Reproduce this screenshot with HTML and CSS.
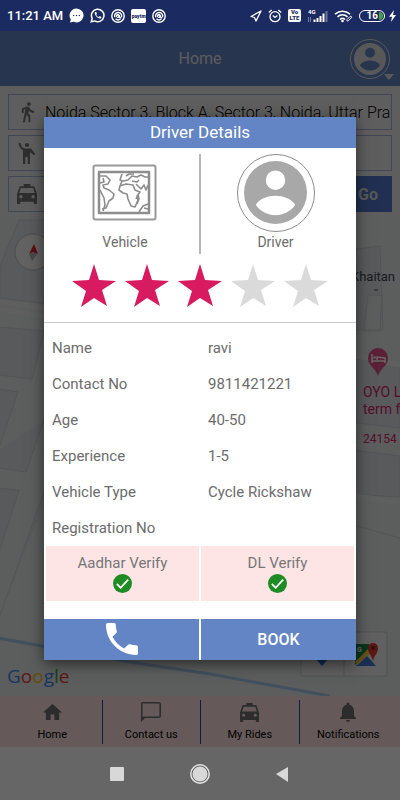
FILE: index.html
```
<!DOCTYPE html>
<html lang="en">
<head>
<meta charset="utf-8">
<meta name="viewport" content="width=device-width, initial-scale=1">
<title>Driver Details</title>
<link rel="stylesheet" href="styles.css">
</head>
<body>
<svg class="sprite" aria-hidden="true">
  <symbol id="person" viewBox="2 2 20 20"><path fill-rule="evenodd" d="M12 2a10 10 0 1 0 0 20 10 10 0 0 0 0-20zM12 5a3.100 3.100 0 1 1 0 6.200a3.100 3.100 0 0 1 0-6.200zM12 19.200c-2.500 0-4.900-1.300-6-2.900-.2-.3-.2-.5 0-.8 1-1.500 3.600-2.500 6-2.500s5 1 6 2.500c.2.3.2.5 0 .8-1.100 1.600-3.500 2.900-6 2.900z"/></symbol>
  <symbol id="taxi" viewBox="3 3 18 18"><path fill-rule="evenodd" d="M18.920 6c-.2-.6-.77-1-1.420-1H15V3H9v2H6.500c-.66 0-1.210.42-1.420 1L3 12v8c0 .55.450 1 1 1h1c.55 0 1-.45 1-1v-1h12v1c0 .55.450 1 1 1h1c.55 0 1-.45 1-1v-8zM6.500 16a1.500 1.500 0 1 1 0-3 1.500 1.500 0 0 1 0 3zM17.500 16a1.500 1.500 0 1 1 0-3 1.500 1.500 0 0 1 0 3zM5 11l1.500-4.500h11L19 11z"/></symbol>
  <symbol id="star" viewBox="0 0 44 43"><path d="M22 0 27 16 44 17 30 26 35 42 22 34 9 43 14 27 0 17 17 16z"/></symbol>
  <symbol id="check" viewBox="2 2 20 20"><circle cx="12" cy="12" r="10" fill="#1f8b24"/><path d="M6 12.500l4 4 8-8.500" fill="none" stroke="#fff" stroke-width="1.900"/></symbol>
  <symbol id="swirl" viewBox="0 0 14 14"><g fill="none" stroke="#fff"><circle cx="7" cy="7" r="6.200" stroke-width="1.400"/><path d="M3.800 8.300C2.900 5.500 5 3.400 7.300 3.500c2.600.1 4 2.400 3.100 4.700M4.500 9.700c1.300 1.300 3.500 1.400 5 .1M5.800 5.300l4 4" stroke-width="1.400"/><circle cx="7" cy="7" r="1.600"/></g></symbol>
</svg>

<header class="status">
  <span class="clock">11:21 AM</span>
  <svg width="15" height="15" viewBox="0 0 15 15"><path d="M7.500.5a7 7 0 1 1-3 13.300L1 14.500l.8-3A7 7 0 0 1 7.500.5z" fill="#fff"/><path d="M4 7.500h1.200m1.700 0h1.200m1.700 0H11" stroke="#1b2b62" stroke-width="1.200"/></svg>
  <svg width="15" height="15" viewBox="0 0 24 24"><path d="M2 22l1.500-5.300A10 10 0 1 1 7.400 20.700z" fill="none" stroke="#fff" stroke-width="2.400"/><path d="M8.200 6.500c-2.600 3 3.500 10.300 7.800 10.400 1.500 0 2.600-1.600 2.200-2.600l-2.500-1.400-1.500 1.600c-2-.6-3.600-2.200-4.200-3.800L11.100 9 10 6.500z" fill="#fff"/></svg>
  <svg width="14" height="14"><use href="#swirl"/></svg>
  <span class="chip paytm">paytm</span>
  <svg width="14" height="14"><use href="#swirl"/></svg>
  <span class="spacer"></span>
  <svg width="12" height="12" viewBox="0 0 12 12"><path d="M11 1 1 6.500l3.500 1L6 11z" fill="none" stroke="#fff" stroke-width="1.300" stroke-linejoin="round"/></svg>
  <svg width="14" height="14" viewBox="0 0 14 14"><g fill="none" stroke="#fff" stroke-width="1.300"><circle cx="7" cy="7.700" r="5"/><path d="M.8 3.500 3.700 1M13.200 3.500 10.300 1M4.800 6.500 7 8.500l2.400-2"/></g></svg>
  <span class="chip volte"><b>Vo</b><b>LTE</b></span>
  <svg width="21" height="14" viewBox="0 0 21 14"><text x="1" y="5" class="net">4G</text><path d="M1.500 13V8m2 0v5" stroke="#8b94b8" stroke-width=".8"/><path d="M7.500 13v-2.500m3 2.500V9m3 4V7m3 6V4.500" stroke="#fff" stroke-width="2"/><path d="M19.500 13V2" stroke="#69749e" stroke-width="2"/></svg>
  <svg width="19" height="14" viewBox="0 0 19 14"><g fill="none" stroke="#fff" stroke-width="1.600"><path d="M1 5.200c4.500-4 10.500-4 15 0M3.500 7.900c3-2.700 7-2.700 10 0M6 10.500c1.500-1.300 3.500-1.300 5 0"/><path d="M13 10.500l3-3c1-.8 2.200.4 1.300 1.300l-3 3c-1 .8-2.200-.4-1.300-1.300z" stroke-width="1"/></g><circle cx="8.500" cy="12" r="1.300" fill="#fff"/></svg>
  <span class="power"><span class="battery">16<i></i></span>
  <svg width="7" height="12" viewBox="0 0 7 12"><path d="M5 0 0 6.800h3L2 12l5-7H4z" fill="#fff"/></svg></span>
</header>

<main class="app">
  <div class="titlebar">
    <h1>Home</h1>
    <button class="account" aria-label="Account"><span class="ring"><svg><use href="#person"/></svg></span></button>
    <svg class="caret" width="10" height="6" viewBox="0 0 10 6"><path d="M0 0h10L5 6z"/></svg>
  </div>

  <form class="search">
    <label class="field">
      <svg viewBox="4 1 16 23" width="15" height="25"><path d="M13.500 5.500a2 2 0 1 0 0-4 2 2 0 0 0 0 4zM9.800 8.900 7 23h2.100l1.800-8 2.100 2v6h2v-7.500l-2.100-2 .6-3A7.300 7.300 0 0 0 19 13v-2c-1.900 0-3.500-1-4.300-2.400l-1-1.600c-.4-.6-1-1-1.700-1-.3 0-.5.1-.8.1L6 8.300V13h2V9.600z"/></svg>
      <input type="text" aria-label="Pickup location" value="Noida Sector 3, Block A, Sector 3, Noida, Uttar Pra">
    </label>
    <label class="field">
      <svg viewBox="3 1 18 22" width="18" height="24"><circle cx="12" cy="4" r="2.100"/><path d="M16 7.500H9.500C7.200 6.800 5.900 4.900 5.700 2H3.600c.1 3.200 1.700 6 4.400 7.400V23h2.300v-7h2.400v7H15v-12l3.700 3.300 1.500-1.500z"/></svg>
      <input type="text" aria-label="Drop location">
    </label>
    <div class="line">
      <label class="field">
        <svg width="20" height="20"><use href="#taxi"/></svg>
        <input type="text" aria-label="Ride type">
      </label>
      <button class="go" type="button">Go</button>
    </div>
  </form>

  <svg class="map" viewBox="0 216 400 480" preserveAspectRatio="xMinYMin slice" role="img" aria-label="Map">
    <rect y="216" width="400" height="480" fill="#e6e8e8"/>
    <g fill="#dfe1e5" stroke="#cfd1d5">
      <path d="M19 220 0 266v32l48 6v-84z"/>
      <path d="M-1 327l45 4-12 48-33-4zM-1 389l19 3-19 56zM44 420 26 472l-27-4v-18M-1 488l20 2-20 62zM48 494 44 492-1 618"/>
      <path d="M350 250l30-4 3 84h-33zM364 331h16l2-36h-14zM350 358l50 8v62l-50-6zM350 450l50 6v41l-50-3zM350 524l50 14"/>
    </g>
    <path d="M-2 302l50 6M-2 309l50 8M350 355l52 10M350 495l52 8" stroke="#ededed" stroke-width="5" fill="none"/>
    <path d="M-2 638 130 662 210 674 330 696" stroke="#a4c8e8" stroke-width="3" fill="none"/>
    <circle cx="33" cy="252" r="18" fill="#f5f5f5" stroke="#bbb"/>
    <path d="M34 244 38 254 33 252 29 254z" fill="#e2202c"/><path d="M29 254 33 252 37 254 32 261z" fill="#b4b4b4"/>
    <g class="place"><text x="351" y="281" fill="#3d4650" class="area">Khaitan</text><path d="M374 290h4" stroke="#555"/></g>
    <path d="M378 376c-3-9-10-10-10-18a10 10 0 0 1 20 0c0 8-7 9-10 18z" fill="#e0508a"/>
    <path d="M372 354v9m0-2h13v2m0-2v-3l-8-1v3" fill="none" stroke="#fff" stroke-width="1.500"/><circle cx="374.500" cy="357.500" r="1.300" fill="#fff"/>
    <g class="place" fill="#d8246c"><text x="363" y="397">OYO L</text><text x="363" y="414">term f</text><text x="363" y="443" class="small">24154</text></g>
    <g><rect x="301" y="632" width="86" height="44" rx="2" fill="#f0f0f0" stroke="#ccc"/><path d="M344 632v44" stroke="#ccc"/><path d="M322 666 315 658h14z" fill="#2566cf"/>
      <path d="M356 644h19v21h-19z" fill="#e8e8e8"/><path d="M355 644h14v8l-14 13z" fill="#178b43"/><path d="M356 666 366 655 376 666z" fill="#3d76d8"/><path d="M355 662 368 649l3 3-13 13z" fill="#f4cf46"/><path d="M373 661c-1-6-5-7-5-13a5 5 0 0 1 10 0c0 6-4 7-5 13z" fill="#df3e31"/><circle cx="373" cy="648" r="2" fill="#8b1d18"/><text x="357" y="652" class="mini">G</text></g>
    <text x="7" y="683" class="google"><tspan fill="#4285f4">G</tspan><tspan fill="#ea4335">o</tspan><tspan fill="#fbbc05">o</tspan><tspan fill="#4285f4">g</tspan><tspan fill="#34a853">l</tspan><tspan fill="#ea4335">e</tspan></text>
  </svg>

  <nav class="tabs">
    <a href="#home"><svg viewBox="2 3 20 17" width="19" height="18"><path d="M10 20v-6h4v6h5v-8h3L12 3 2 12h3v8z"/></svg>Home</a>
    <a href="#contact"><svg viewBox="2 2 20 20" width="20" height="20"><path fill-rule="evenodd" d="M4 2h16c1.100 0 2 .9 2 2v12c0 1.100-.9 2-2 2H6l-4 4V4c0-1.100.9-2 2-2zM3.500 17l1-.6H20.400V3.600H3.500z"/></svg>Contact us</a>
    <a href="#rides"><svg width="19" height="19"><use href="#taxi"/></svg>My Rides</a>
    <a href="#notifications"><svg viewBox="4 2 16 20" width="16" height="20"><path d="M12 22c1.100 0 2-.9 2-2h-4c0 1.100.9 2 2 2zm6-6v-5c0-3.070-1.640-5.640-4.500-6.320V4a1.500 1.500 0 0 0-3 0v.68C7.630 5.360 6 7.920 6 11v5l-2 2v1h16v-1z"/></svg>Notifications</a>
  </nav>

  <div class="backdrop">
    <section class="dialog" role="dialog" aria-labelledby="dialog-title">
      <h2 id="dialog-title">Driver Details</h2>
      <div class="photos">
        <figure>
          <svg width="78" height="78" viewBox="0 0 78 78" fill="none" stroke="#8d8d8d" stroke-linejoin="round">
            <rect x="7.500" y="11.500" width="62" height="54" rx="2" stroke="#999" stroke-width="2"/>
            <rect x="13" y="18" width="50" height="41" stroke-width="2.500"/>
            <path stroke-width="1.600" d="M14 22h6l4 4-2 4-5 1 1 3 5 2 5 4-1 4-4 3-3 7-4 1M14 36l4 8 1 7-2 6M14 29l4-1-1-4M36 20l-2 6 3 1 5-1 4-4 5 1 4-2 4 2h4M40 22l3-2 5 0M34 32l-1 4 4 3 4 1 1 5 3 7 4 1 3-7-1-4 3-4-5-2-2-5-7-1zM36 27l-2 5M46 27l5 1 2-2M50 30l5 5 3-4 2 5 2-5M50 45l2-4 1 4-2 5M53 58l4-6 5-2M58 54l4 1"/>
          </svg>
          <figcaption>Vehicle</figcaption>
        </figure>
        <figure>
          <span class="ring"><svg><use href="#person"/></svg></span>
          <figcaption>Driver</figcaption>
        </figure>
      </div>
      <div class="rating" role="img" aria-label="3 out of 5 stars">
        <svg class="on"><use href="#star"/></svg><svg class="on"><use href="#star"/></svg><svg class="on"><use href="#star"/></svg><svg><use href="#star"/></svg><svg><use href="#star"/></svg>
      </div>
      <table>
        <tr><th scope="row">Name</th><td>ravi</td></tr>
        <tr><th scope="row">Contact No</th><td>9811421221</td></tr>
        <tr><th scope="row">Age</th><td>40-50</td></tr>
        <tr><th scope="row">Experience</th><td>1-5</td></tr>
        <tr><th scope="row">Vehicle Type</th><td>Cycle Rickshaw</td></tr>
        <tr><th scope="row">Registration No</th><td></td></tr>
      </table>
      <div class="verify">
        <div>Aadhar Verify<svg><use href="#check"/></svg></div>
        <div>DL Verify<svg><use href="#check"/></svg></div>
      </div>
      <div class="actions">
        <button aria-label="Call driver"><svg viewBox="3 3 18 18" width="32" height="32"><path d="M6.620 10.790c1.440 2.830 3.760 5.140 6.590 6.590l2.200-2.200c.27-.27.670-.36 1.020-.24 1.120.37 2.330.57 3.570.57.55 0 1 .45 1 1V20c0 .55-.45 1-1 1-9.390 0-17-7.610-17-17 0-.55.450-1 1-1h3.500c.55 0 1 .45 1 1 0 1.250.2 2.450.57 3.570.11.350.030.740-.25 1.020z"/></svg></button>
        <button>BOOK</button>
      </div>
    </section>
  </div>
</main>

<footer class="sysnav">
  <button aria-label="Recent apps"><svg width="22" height="22"><rect x="4" y="4" width="14" height="14" rx="1"/></svg></button>
  <button aria-label="Home screen"><svg width="22" height="22"><circle cx="11" cy="11" r="7.500"/><circle cx="11" cy="11" r="9.200" fill="none" stroke="#e4e4e4" stroke-width="1.500"/></svg></button>
  <button aria-label="Back"><svg width="22" height="22"><path d="M4 11 16 4v15z"/></svg></button>
</footer>
</body>
</html>
```

FILE: styles.css
```
* { box-sizing: border-box; }

body {
  margin: 0;
  min-height: 100vh;
  display: flex;
  flex-direction: column;
  font-family: Roboto, sans-serif;
  color: #111;
  background: #666;
}

h1, h2, figure { margin: 0; font-weight: 400; }
button { border: 0; padding: 0; background: none; font: inherit; color: inherit; }
svg { display: block; flex: none; }
.sprite { position: absolute; width: 0; height: 0; }

/* Status bar */
.status {
  height: 31px;
  padding: 0 4px 0 7px;
  display: flex;
  align-items: center;
  gap: 6px;
  color: #fff;
  background: #1b2b62;
}
.clock { font-size: 13px; font-weight: 500; }
.spacer { flex: 1; }
.chip {
  background: #fff;
  color: #1b2b62;
  border-radius: 2px;
  text-align: center;
  font-weight: 900;
}
.paytm { width: 15px; height: 14px; font-size: 5px; line-height: 14px; }
.volte { width: 13px; height: 13px; font-size: 6px; line-height: 6px; }
.volte b { display: block; }
.net { font-size: 6px; font-weight: 700; fill: #fff; }
.power { display: flex; align-items: center; gap: 4px; }
.battery {
  width: 26px;
  height: 12px;
  border: 1px solid #fff;
  border-radius: 6px;
  display: flex;
  align-items: center;
  justify-content: flex-end;
  gap: 1px;
  padding-right: 1px;
  font-size: 10px;
  font-weight: 700;
}
.battery i { width: 4px; height: 8px; background: #43a047; border-radius: 0 4px 4px 0; }

/* App screen */
.app {
  flex: 1;
  position: relative;
  display: flex;
  flex-direction: column;
  background: #ececec;
}
.titlebar {
  position: relative;
  height: 55px;
  flex: none;
  display: grid;
  grid-template-columns: 1fr auto 1fr;
  align-items: center;
  padding: 0 10px;
  background: #6485c5;
}
.titlebar h1 { grid-column: 2; font-size: 16px; color: #e4e4e4; }
.account { justify-self: end; }
.caret { position: absolute; right: 6px; bottom: 6px; fill: #ddd; }
.ring {
  display: grid;
  place-items: center;
  border-radius: 50%;
}
.account .ring { width: 40px; height: 40px; border: 1px solid #ddd; fill: #ddd; }
.account .ring svg { width: 32px; height: 32px; }

.search {
  padding: 8px 8px 4px;
  display: flex;
  flex-direction: column;
  gap: 5px;
}
.field {
  flex: 1;
  height: 36px;
  min-width: 0;
  display: grid;
  grid-template-columns: 36px 1fr;
  align-items: center;
  border: 1px solid #a9b0d4;
  fill: #737373;
}
.field svg { justify-self: center; }
.search > .field { flex: none; }
.field input {
  width: 100%;
  min-width: 0;
  border: 0;
  padding: 0;
  background: none;
  font: 300 16px Roboto, sans-serif;
  color: #000;
}
.line { display: flex; }
.go {
  width: 48px;
  background: #5478cc;
  color: #ddd;
  font-size: 16px;
  font-weight: 700;
}
.map { flex: 1; width: 100%; height: 0; }
.place { font-size: 14px; }
.place .area { font-size: 13px; }
.place .small { font-size: 12px; }
.google { font: 500 19px "Open Sans", sans-serif; }
.mini { font-size: 7px; font-weight: 700; fill: #fff; }

.tabs {
  height: 51px;
  flex: none;
  display: grid;
  grid-template-columns: repeat(4, 1fr);
  padding: 4px 3px;
  background: #fde0df;
}
.tabs a {
  display: grid;
  grid-template-rows: 24px 20px;
  place-items: center;
  font-size: 11px;
  color: #000;
  fill: #6e6e6e;
  text-decoration: none;
}
.tabs a + a { border-left: 1px solid #34489c; }

/* Driver dialog */
.backdrop {
  position: absolute;
  inset: 0;
  display: flex;
  align-items: center;
  padding: 0 44px 2px;
  background: rgba(0, 0, 0, .6);
}
.dialog {
  flex: 1;
  background: #fff;
  color: #6c6c6c;
  box-shadow: 0 4px 14px rgba(0, 0, 0, .55);
}
.dialog h2 {
  font-size: 17px;
  line-height: 31px;
  text-align: center;
  color: #fff;
  background: #6385c5;
}
.photos {
  display: grid;
  grid-template-columns: 1fr 1fr;
  padding: 6px 0;
}
.photos figure {
  height: 100px;
  display: flex;
  flex-direction: column;
  align-items: center;
  padding-left: 6px;
  font-size: 14px;
}
.photos figure + figure {
  padding: 0 6px 0 0;
  border-left: 2px solid #b8b8b8;
  margin-left: -1px;
}
.photos .ring { width: 78px; height: 78px; border: 1px solid #8c8c8c; fill: #a8a8a8; }
.photos .ring svg { width: 63px; height: 63px; }
.photos figcaption { line-height: 20px; }
.rating {
  display: flex;
  justify-content: center;
  gap: 9px;
  padding: 4px 0 15px;
  border-bottom: 1px solid #c8c8c8;
}
.rating svg { width: 44px; height: 43px; fill: #dadada; }
.rating .on { fill: #d81b60; }

table {
  width: 100%;
  margin-top: 7px;
  border-collapse: collapse;
  table-layout: fixed;
  font-size: 15px;
}
tr { height: 36px; }
th, td { width: 50%; padding: 0 0 0 8px; font-weight: 400; text-align: left; }
.verify {
  display: grid;
  grid-template-columns: 1fr 1fr;
  gap: 2px;
  padding: 0 2px;
  font-size: 15px;
  line-height: 18px;
}
.verify div {
  height: 55px;
  padding-top: 8px;
  display: flex;
  flex-direction: column;
  align-items: center;
  gap: 2px;
  color: #777;
  background: #fde5e6;
}
.verify svg { width: 19px; height: 19px; }
.actions {
  display: grid;
  grid-template-columns: 1fr 1fr;
  gap: 2px;
  margin-top: 18px;
}
.actions button {
  height: 41px;
  display: grid;
  place-items: center;
  color: #fff;
  fill: #fff;
  background: #6385c5;
  font-size: 16px;
  font-weight: 500;
}

/* System navigation */
.sysnav {
  height: 53px;
  display: flex;
  justify-content: center;
  align-items: center;
  gap: 61px;
  fill: #d8d8d8;
}
```
